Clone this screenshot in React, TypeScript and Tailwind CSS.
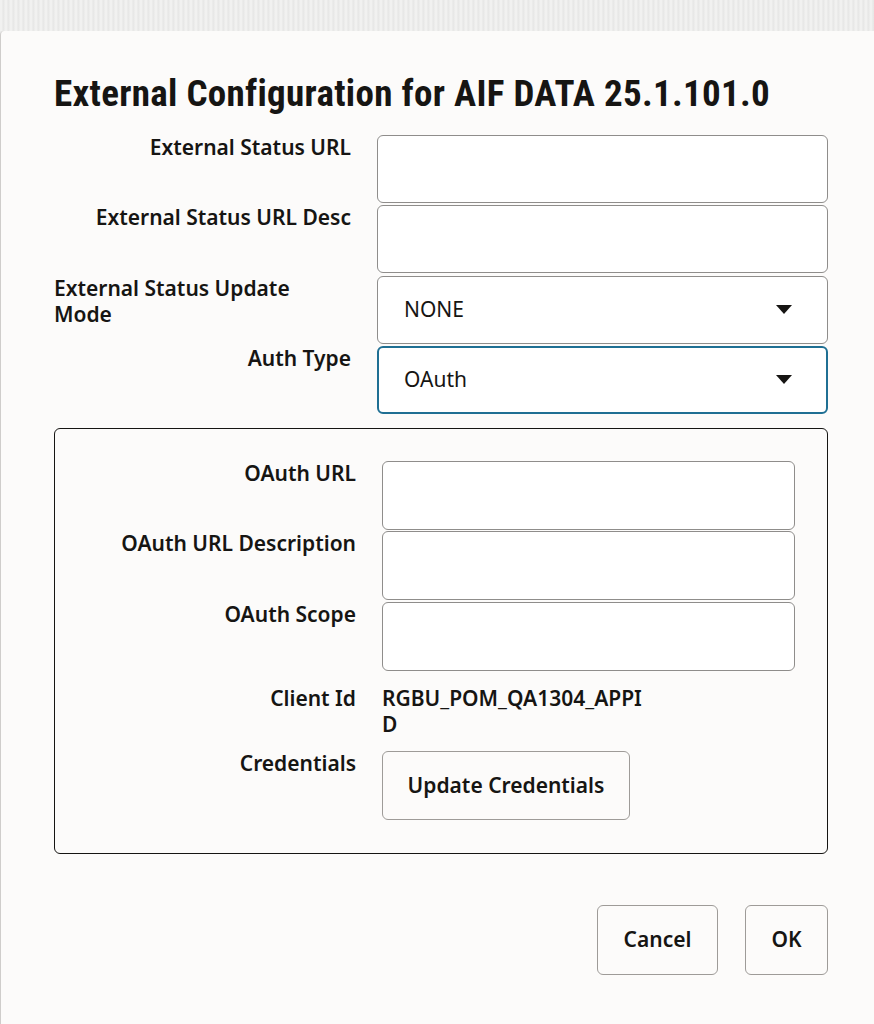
import React from "react";

const Caret = () => (
  <svg width="16" height="9" viewBox="0 0 16 9" className="shrink-0">
    <path d="M0 0 L16 0 L8 9 Z" fill="#161513" />
  </svg>
);

const labelCls =
  "flex text-left text-[21px] leading-[26px] font-semibold text-[#161513]";

function OuterRow({
  label,
  start,
  children,
}: {
  label: React.ReactNode;
  start?: boolean;
  children: React.ReactNode;
}) {
  return (
    <div className="flex gap-x-[26px]">
      <div className={`w-[297px] shrink-0 ${start ? "justify-start" : "justify-end"} ${labelCls}`}>
        <div className="-mt-[1px]">{label}</div>
      </div>
      {children}
    </div>
  );
}

function InnerRow({ label, children }: { label: React.ReactNode; children: React.ReactNode }) {
  return (
    <div className="flex gap-x-[26px]">
      <div className={`w-[269px] shrink-0 justify-end ${labelCls}`}>
        <div className="-mt-[1px]">{label}</div>
      </div>
      {children}
    </div>
  );
}

export default function App() {
  return (
    <div
      className="min-h-screen bg-[#ebebea] text-[#161513]"
      style={{ fontFamily: '"Noto Sans", "Open Sans", sans-serif' }}
    >
      <div className="h-[31px] bg-[#ebebea] bg-[repeating-linear-gradient(90deg,#f1f1f0_0px,#f1f1f0_2px,#e5e5e4_3px,#efefee_5px)]" />
      <div className="min-h-[993px] bg-[#fcfbfa] border-l border-[#cfcdcb] rounded-tl-[4px] pl-[53px] pr-[46px]">
        <h1
          className="pt-[42px] text-[37px] leading-[41px] font-bold tracking-[0.3px] text-[#161513] whitespace-nowrap"
          style={{ fontFamily: '"Liberation Sans Narrow", "Arial Narrow", "Roboto Condensed", sans-serif' }}
        >
          External Configuration for AIF DATA 25.1.101.0
        </h1>

        <div className="mt-[21px] flex flex-col gap-y-[2.33px]">
          <OuterRow label="External Status URL">
            <div className="h-[68px] w-[452px] rounded-[6px] border border-[#8f8d8b] bg-white" />
          </OuterRow>
          <OuterRow label="External Status URL Desc">
            <div className="h-[68px] w-[452px] rounded-[6px] border border-[#8f8d8b] bg-white" />
          </OuterRow>
          <OuterRow
            start
            label={
              <>
                <span className="block">External Status Update</span>
                <span className="block">Mode</span>
              </>
            }
          >
            <div className="h-[68px] w-[452px] rounded-[6px] border border-[#8f8d8b] bg-white flex items-center justify-between pl-[26px] pr-[35px]">
              <span className="text-[21px] text-[#161513]">NONE</span>
              <Caret />
            </div>
          </OuterRow>
          <OuterRow label="Auth Type">
            <div className="h-[68px] w-[452px] rounded-[6px] border-2 border-[#1f6f93] bg-white flex items-center justify-between pl-[25px] pr-[34px]">
              <span className="text-[21px] text-[#161513]">OAuth</span>
              <Caret />
            </div>
          </OuterRow>
        </div>

        <div className="mt-[14px] rounded-[6px] border border-[#161513] pl-[32px] pr-[32px] pt-[32px] pb-[33px]">
          <div className="flex flex-col gap-y-[1.5px]">
            <InnerRow label="OAuth URL">
              <div className="h-[69px] w-[414px] rounded-[6px] border border-[#8f8d8b] bg-white" />
            </InnerRow>
            <InnerRow label="OAuth URL Description">
              <div className="h-[69px] w-[414px] rounded-[6px] border border-[#8f8d8b] bg-white" />
            </InnerRow>
            <InnerRow label="OAuth Scope">
              <div className="h-[69px] w-[414px] rounded-[6px] border border-[#8f8d8b] bg-white" />
            </InnerRow>
          </div>
          <div className="mt-[15px]">
            <InnerRow label="Client Id">
              <div className="-mt-[1px] text-[21px] leading-[26px] font-semibold text-[#161513]">
                <span className="block">RGBU_POM_QA1304_APPI</span>
                <span className="block">D</span>
              </div>
            </InnerRow>
          </div>
          <div className="mt-[14px]">
            <InnerRow label="Credentials">
              <button className="h-[69px] w-[248px] rounded-[6px] border border-[#9e9b98] text-[21px] font-semibold text-[#161513]">
                Update Credentials
              </button>
            </InnerRow>
          </div>
        </div>

        <div className="mt-[51px] flex justify-end gap-x-[27px]">
          <button className="h-[70px] w-[121px] rounded-[6px] border border-[#9e9b98] text-[21px] font-semibold text-[#161513]">
            Cancel
          </button>
          <button className="h-[70px] w-[83px] rounded-[6px] border border-[#9e9b98] text-[21px] font-semibold text-[#161513]">
            OK
          </button>
        </div>
      </div>
    </div>
  );
}
